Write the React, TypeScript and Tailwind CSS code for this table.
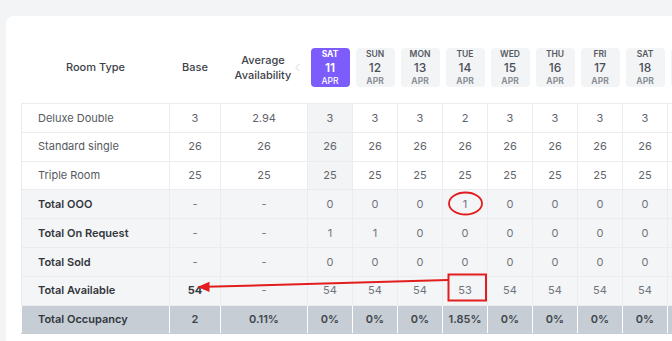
import { ChevronLeft } from "lucide-react";

const days = [
  { d: "SAT", n: 11 },
  { d: "SUN", n: 12 },
  { d: "MON", n: 13 },
  { d: "TUE", n: 14 },
  { d: "WED", n: 15 },
  { d: "THU", n: 16 },
  { d: "FRI", n: 17 },
  { d: "SAT", n: 18 },
  { d: "SUN", n: 19 },
];

type Row = { name: string; base: string; avg: string; vals: string[]; total?: boolean; occ?: boolean; boldBase?: boolean };

const rep = (v: string) => Array(9).fill(v);

const rows: Row[] = [
  { name: "Deluxe Double", base: "3", avg: "2.94", vals: ["3", "3", "3", "2", "3", "3", "3", "3", "3"] },
  { name: "Standard single", base: "26", avg: "26", vals: rep("26") },
  { name: "Triple Room", base: "25", avg: "25", vals: rep("25") },
  { name: "Total OOO", base: "-", avg: "-", vals: ["0", "0", "0", "1", "0", "0", "0", "0", "0"], total: true },
  { name: "Total On Request", base: "-", avg: "-", vals: ["1", "1", "0", "0", "0", "0", "0", "0", "0"], total: true },
  { name: "Total Sold", base: "-", avg: "-", vals: rep("0"), total: true },
  { name: "Total Available", base: "54", avg: "-", vals: ["54", "54", "54", "53", "54", "54", "54", "54", "54"], total: true, boldBase: true },
  { name: "Total Occupancy", base: "2", avg: "0.11%", vals: ["0%", "0%", "0%", "1.85%", "0%", "0%", "0%", "0%", "0%"], occ: true },
];

function Annotations() {
  return (
    <svg className="absolute left-0 top-0 pointer-events-none" width="672" height="341" viewBox="0 0 672 341">
      <ellipse cx="465.5" cy="203.5" rx="16.5" ry="11" fill="none" stroke="#e11d1d" strokeWidth="1.8" />
      <rect x="448.5" y="274.5" width="37.5" height="26" fill="none" stroke="#e11d1d" strokeWidth="2" />
      <line x1="448" y1="280" x2="206" y2="286.8" stroke="#e11d1d" strokeWidth="2" />
      <polygon points="197.5,287 209.5,281.8 209.5,292" fill="#e11d1d" />
    </svg>
  );
}

export default function App() {
  return (
    <div
      className="relative w-[672px] h-[341px] overflow-hidden bg-[#f3f4f6]"
      style={{ fontFamily: "Inter, 'Open Sans', sans-serif" }}
    >
      <div className="ml-[6px] mt-[16px] w-[720px] h-[400px] bg-white rounded-tl-[8px] pl-[15px] pt-[32px]">
        <table className="border-collapse table-fixed w-[691px] text-[11px]">
          <colgroup>
            <col className="w-[148px]" />
            <col className="w-[51px]" />
            <col className="w-[87px]" />
            {days.map((_, i) => (
              <col key={i} className="w-[45px]" />
            ))}
          </colgroup>
          <thead>
            <tr>
              <th className="p-0 pb-[16px] align-top font-medium text-[#3d4249]">
                <div className="h-[39px] flex items-center justify-center">Room Type</div>
              </th>
              <th className="p-0 pb-[16px] align-top font-medium text-[#3d4249]">
                <div className="h-[39px] flex items-center justify-center">Base</div>
              </th>
              <th className="p-0 pb-[16px] align-top font-medium text-[#3d4249]">
                <div className="relative h-[39px] flex items-center justify-center leading-[15px]">
                  <span className="pr-[2px]">
                    Average
                    <br />
                    Availability
                  </span>
                  <ChevronLeft className="absolute right-[4px] top-[13px] text-[#c4c7cc]" size={13} strokeWidth={1.5} />
                </div>
              </th>
              {days.map((d, i) => (
                <th key={i} className="p-0 pb-[16px] align-top">
                  <div
                    className={
                      i === 0
                        ? "mx-[3px] h-[39px] rounded-[4px] bg-[#7c5cfb] text-white flex flex-col items-center justify-center leading-none"
                        : "mx-[3px] h-[39px] rounded-[4px] bg-[#f3f4f6] flex flex-col items-center justify-center leading-none"
                    }
                  >
                    <span className={i === 0 ? "text-[8.5px] font-bold" : "text-[8.5px] font-semibold text-[#555a61]"}>{d.d}</span>
                    <span className={i === 0 ? "text-[12px] font-semibold mt-[3px]" : "text-[12px] font-medium text-[#4a4f57] mt-[3px]"}>
                      {d.n}
                    </span>
                    <span className={i === 0 ? "text-[8.5px] font-medium mt-[3px]" : "text-[8.5px] text-[#8b9097] mt-[3px]"}>APR</span>
                  </div>
                </th>
              ))}
            </tr>
          </thead>
          <tbody>
            {rows.map((r) => {
              const rowBg = r.occ ? "bg-[#c6cdd5]" : r.total ? "bg-[#f4f5f7]" : "bg-white";
              const border = r.occ ? "border-x border-x-white border-y border-y-[#c6cdd5]" : "border border-[#eaecef]";
              const nameCls = r.total || r.occ ? "font-semibold text-[#33373d]" : "text-[#555a61]";
              const valCls = r.occ ? "font-semibold text-[#40454c]" : r.total ? "text-[#6f747b]" : "text-[#5f646b]";
              return (
                <tr key={r.name} className={rowBg}>
                  <td className={`${border} h-[28.8px] p-0 pl-[16px] ${nameCls}`}>{r.name}</td>
                  <td className={`${border} h-[28.8px] p-0 text-center ${r.boldBase ? "font-bold text-[#33373d]" : valCls}`}>{r.base}</td>
                  <td className={`${border} h-[28.8px] p-0 text-center ${valCls}`}>{r.avg}</td>
                  {r.vals.map((v, i) => (
                    <td
                      key={i}
                      className={`${border} h-[28.8px] p-0 text-center ${valCls} ${i === 0 && !r.total && !r.occ ? "bg-[#f3f4f6]" : ""}`}
                    >
                      {v}
                    </td>
                  ))}
                </tr>
              );
            })}
          </tbody>
        </table>
      </div>
      <Annotations />
    </div>
  );
}
